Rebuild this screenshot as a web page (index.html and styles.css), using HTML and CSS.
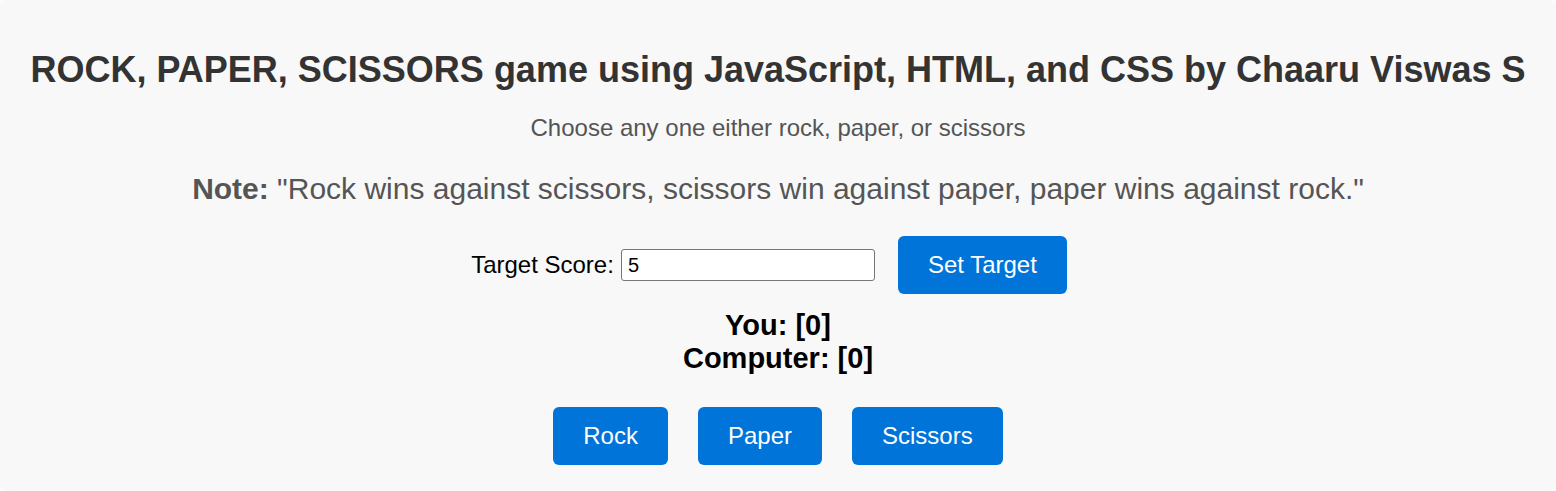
FILE: index.html
```html
<!DOCTYPE html>
<html lang="en">
<head>
<meta charset="utf-8">
<title>Rock, Paper, Scissors</title>
<link rel="stylesheet" href="styles.css">
</head>
<body>
<main class="card">
  <h1 class="title">ROCK, PAPER, SCISSORS game using JavaScript, HTML, and CSS by Chaaru Viswas S</h1>
  <p class="sub">Choose any one either rock, paper, or scissors</p>
  <p class="note"><b>Note:</b> "Rock wins against scissors, scissors win against paper, paper wins against rock."</p>
  <div class="target">
    <label class="target-label" for="target">Target Score:</label>
    <input class="target-input" id="target" type="text" value="5">
    <button class="btn btn-set">Set Target</button>
  </div>
  <div class="scores">
    <div class="score">You: [0]</div>
    <div class="score">Computer: [0]</div>
  </div>
  <div class="choices">
    <button class="btn">Rock</button>
    <button class="btn">Paper</button>
    <button class="btn">Scissors</button>
  </div>
</main>
</body>
</html>
```
FILE: styles.css
```css
html, body {
  margin: 0;
  padding: 0;
  background: #ffffff;
}
body {
  font-family: "Liberation Sans", Arial, sans-serif;
  overflow: hidden;
}
.card {
  box-sizing: border-box;
  height: 491px;
  width: 100%;
  background: #f8f8f8;
  border-radius: 10px;
  box-shadow: 0 0 8px rgba(0, 0, 0, 0.08);
  display: flex;
  flex-direction: column;
  align-items: center;
  text-align: center;
  padding-top: 48px;
}
.title {
  margin: 0;
  font-size: 36px;
  font-weight: bold;
  color: #333333;
  line-height: 43px;
}
.sub {
  margin: 23px 0 0;
  font-size: 24px;
  line-height: 27px;
  color: #555555;
}
.note {
  margin: 30px 0 0;
  font-size: 30px;
  line-height: 35px;
  color: #555555;
}
.target {
  margin-top: 30px;
  padding-right: 18px;
  display: flex;
  align-items: center;
}
.target-label {
  font-size: 24px;
  color: #000;
  margin-right: 7px;
}
.target-input {
  box-sizing: border-box;
  width: 254px;
  height: 32px;
  border: 1px solid #767676;
  border-radius: 3px;
  background: #fff;
  font-family: "Liberation Sans", Arial, sans-serif;
  font-size: 20px;
  padding: 0 6px;
  color: #000;
  margin-right: 23px;
}
.btn {
  height: 58px;
  padding: 0 30px;
  border: none;
  border-radius: 6px;
  background: #0074d9;
  color: #ffffff;
  font-family: "Liberation Sans", Arial, sans-serif;
  font-size: 24px;
  cursor: pointer;
}
.scores {
  margin-top: 15px;
  font-size: 29px;
  font-weight: bold;
  line-height: 33px;
  color: #000;
}
.choices {
  margin-top: 32px;
  display: flex;
  gap: 30px;
}
```
